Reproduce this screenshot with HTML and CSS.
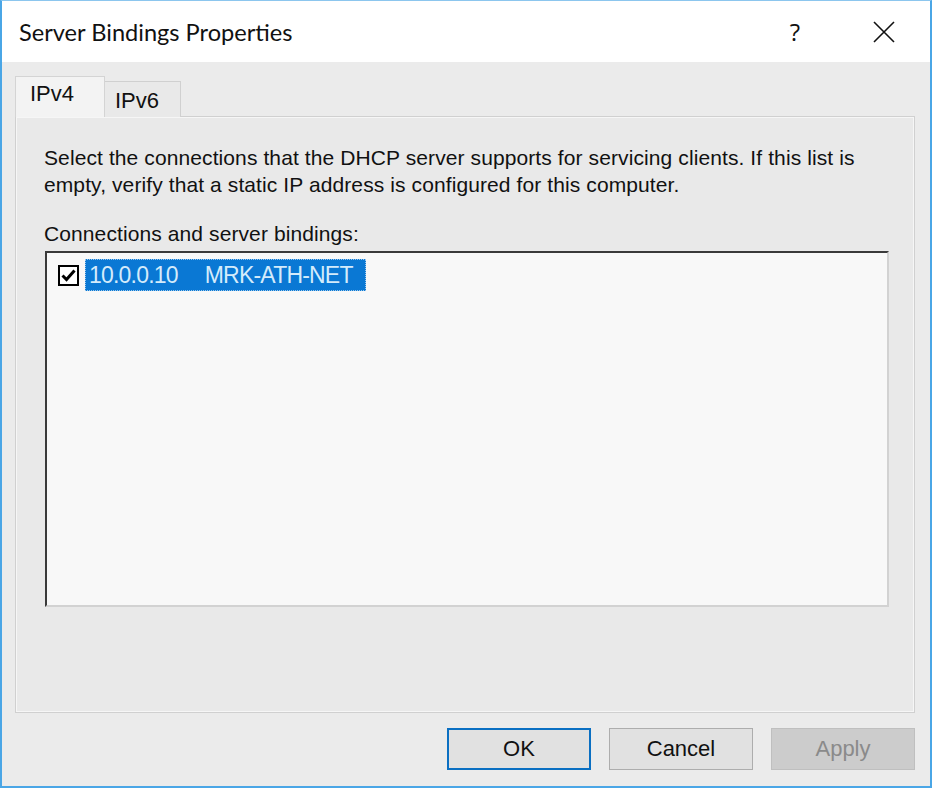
FILE: index.html
```html
<!DOCTYPE html>
<html>
<head>
  <link rel="stylesheet" href="styles.css">
</head>
<body>
  <div class="window">
    <div class="titlebar">
      <span class="title">Server Bindings Properties</span>
      <span class="help-button">?</span>
      <svg class="close-button" width="22" height="22" viewBox="0 0 22 22">
        <path d="M1 1 L21 21 M21 1 L1 21" stroke="#111" stroke-width="1.6" fill="none"/>
      </svg>
    </div>

    <div class="dialog-body">
      <div class="tabs">
        <div class="tab tab-active">IPv4</div>
        <div class="tab">IPv6</div>
      </div>

      <div class="tab-panel">
        <p class="description">
          Select the connections that the DHCP server supports for servicing clients. If this list is<br>
          empty, verify that a static IP address is configured for this computer.
        </p>
        <p class="list-label">Connections and server bindings:</p>

        <div class="list-box">
          <div class="list-item">
            <svg class="checkbox" width="21" height="21" viewBox="0 0 21 21">
              <rect x="1" y="1" width="19" height="19" fill="#fff" stroke="#000" stroke-width="2"/>
              <path d="M4.5 10.5 L8.5 14.5 L16.5 5.5" stroke="#000" stroke-width="3" fill="none"/>
            </svg>
            <span class="item-text">10.0.0.10<span class="item-gap"></span>MRK-ATH-NET</span>
          </div>
        </div>
      </div>

      <div class="button-row">
        <button class="dialog-button default-button">OK</button>
        <button class="dialog-button">Cancel</button>
        <button class="dialog-button disabled-button">Apply</button>
      </div>
    </div>
  </div>
</body>
</html>
```

FILE: styles.css
```css
body {
  margin: 0;
  background-color: #ffffff;
  font-family: "Liberation Sans", Arial, sans-serif;
}

.window {
  width: 932px;
  height: 788px;
  box-sizing: border-box;
  border: 2px solid #4aa6e6;
  border-top: 1px solid #8cc6ee;
  display: flex;
  flex-direction: column;
}

.titlebar {
  height: 61px;
  background-color: #ffffff;
  display: flex;
  align-items: center;
  padding-left: 17px;
}

.title {
  font-family: Lato, "Open Sans", sans-serif;
  font-size: 23.6px;
  color: #111;
  flex: 1;
}

.help-button {
  font-family: "Open Sans", sans-serif;
  font-size: 24px;
  color: #111;
  margin-right: 73px;
}

.close-button {
  margin-right: 35px;
}

.dialog-body {
  flex: 1;
  background-color: #ebebeb;
  padding: 14px 15px 0 13px;
  display: flex;
  flex-direction: column;
}

.tabs {
  display: flex;
  align-items: flex-end;
  height: 41px;
  margin-bottom: -1px;
  position: relative;
  z-index: 1;
}

.tab {
  box-sizing: border-box;
  border: 1px solid #d0d0d0;
  border-bottom: none;
  font-size: 22px;
  color: #111;
  padding: 6px 0 0 10px;
  height: 36px;
  width: 76px;
  background-color: #e9e9e9;
}

.tab-active {
  height: 41px;
  width: 90px;
  padding: 4px 0 0 14px;
  background-color: #f3f3f3;
  border-color: #d4d4d4;
}

.tab-active + .tab {
  border-left: none;
}

.tab-panel {
  flex: 1;
  border: 1px solid #d0d0d0;
  box-shadow: inset 1px 1px 0 #f6f6f6, inset -1px -1px 0 #f6f6f6;
  background-color: #e9e9e9;
  padding: 27px 24px 0 28px;
}

.description {
  margin: 0;
  font-size: 21px;
  line-height: 27px;
  letter-spacing: 0.1px;
  color: #111;
  white-space: nowrap;
}

.list-label {
  margin: 22px 0 4px 0;
  font-size: 21px;
  line-height: 27px;
  letter-spacing: 0.1px;
  color: #111;
}

.list-box {
  margin-left: 1px;
  width: 844px;
  height: 356px;
  box-sizing: border-box;
  border-top: 2px solid #3a3a3a;
  border-left: 2px solid #3a3a3a;
  border-right: 2px solid #d2d2d2;
  border-bottom: 2px solid #d2d2d2;
  background-color: #f8f8f8;
}

.list-item {
  display: flex;
  align-items: center;
  margin-top: 6px;
  padding-left: 11px;
}

.checkbox {
  margin-right: 6px;
}

.item-text {
  background-color: #0a78d4;
  color: #d4ebfb;
  font-size: 23px;
  letter-spacing: -0.8px;
  height: 32px;
  line-height: 32px;
  padding: 0 13px 0 4px;
  outline: 1px dotted #9cc8ec;
  outline-offset: -1px;
}

.item-gap {
  display: inline-block;
  width: 27px;
}

.button-row {
  display: flex;
  justify-content: flex-end;
  gap: 18px;
  padding: 15px 0 16px 0;
}

.dialog-button {
  width: 144px;
  height: 42px;
  box-sizing: border-box;
  border: 1px solid #adadad;
  background-color: #e1e1e1;
  font-family: "Liberation Sans", Arial, sans-serif;
  font-size: 22px;
  color: #111;
}

.default-button {
  border: 2px solid #0a6fc2;
}

.disabled-button {
  background-color: #cccccc;
  border-color: #bfbfbf;
  color: #8a8a8a;
}
```
